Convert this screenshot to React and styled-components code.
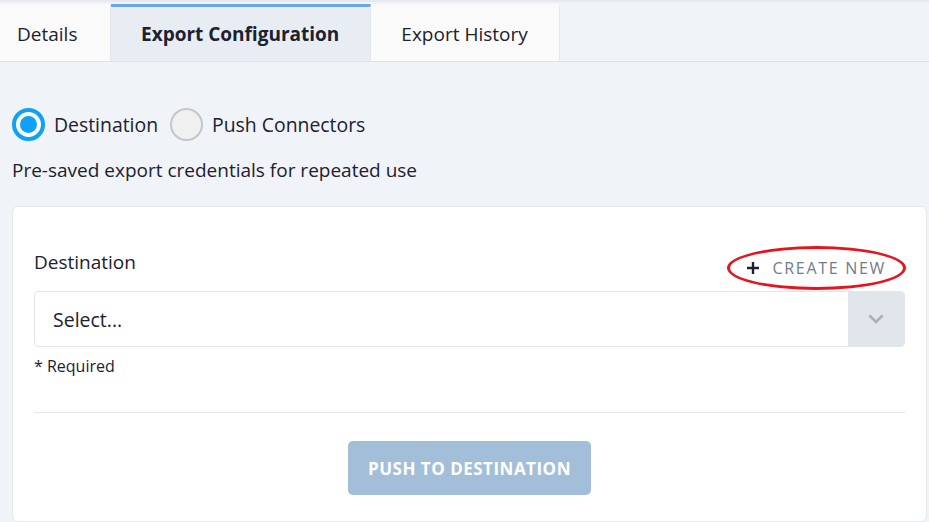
import React from 'react'
import styled, { createGlobalStyle } from 'styled-components'

const GlobalStyle = createGlobalStyle`
  html, body {
    margin: 0;
    padding: 0;
    background: #f0f3f7;
    font-family: "Open Sans", Lato, sans-serif;
    color: #1c2130;
  }
  * { box-sizing: border-box; }
`

const Page = styled.div`
  width: 929px;
  height: 522px;
  overflow: hidden;
  display: flex;
  flex-direction: column;
`

const TabBar = styled.nav`
  display: flex;
  height: 62px;
  padding-top: 2px;
  border-top: 2px solid #e6e9ee;
  border-bottom: 1px solid #dde2e8;
`

const Tab = styled.div`
  display: flex;
  align-items: center;
  padding: 0 31px 0 ${p => (p.$first ? '17px' : '30px')};
  min-width: ${p => p.$min || 0}px;
  font-size: 19px;
  font-weight: ${p => (p.$active ? 700 : 400)};
  background: ${p => (p.$active ? '#e8edf4' : '#fafafa')};
  border-top: 3px solid ${p => (p.$active ? '#6ea8e2' : 'transparent')};
  border-right: 1px solid #e3e6ea;
  color: #1c2130;
`

const Content = styled.main`
  flex: 1;
  padding: 46px 0 0 12px;
  display: flex;
  flex-direction: column;
`

const RadioRow = styled.div`
  display: flex;
  align-items: center;
  gap: 12px;
`

const RadioOption = styled.label`
  display: flex;
  align-items: center;
  gap: 9px;
  font-size: 19.4px;
`

const RadioCircle = styled.span`
  width: 33px;
  height: 33px;
  border-radius: 50%;
  border: ${p => (p.$checked ? '4px solid #0ea1f4' : '2px solid #c4c6c9')};
  background: ${p => (p.$checked ? '#fff' : '#f0f0f0')};
  display: flex;
  align-items: center;
  justify-content: center;
  &::after {
    content: '';
    display: ${p => (p.$checked ? 'block' : 'none')};
    width: 17px;
    height: 17px;
    border-radius: 50%;
    background: #0ea1f4;
  }
`

const Hint = styled.p`
  margin: 16px 0 0;
  font-size: 19px;
`

const Card = styled.section`
  margin-top: 23px;
  flex: 1;
  margin-right: 2px;
  background: #fff;
  border: 1px solid #e4e7ec;
  border-radius: 6px;
  padding: 44px 21px 0 21px;
  display: flex;
  flex-direction: column;
`

const FieldHead = styled.div`
  display: flex;
  justify-content: space-between;
  align-items: flex-end;
  height: 38px;
`

const FieldLabel = styled.span`
  font-size: 19px;
  align-self: flex-start;
  margin-top: -2px;
`

const CreateNew = styled.button`
  position: relative;
  border: none;
  background: none;
  margin-bottom: 10px;
  padding: 0 19px 0 0;
  font-family: inherit;
  font-size: 16px;
  letter-spacing: 1.7px;
  color: #6f7c8e;
  display: flex;
  align-items: center;
  gap: 12px;
  & svg.plus { color: #1c2130; }
`

const Annotation = styled.span`
  position: absolute;
  left: -19px;
  right: -1px;
  top: 50%;
  height: 44px;
  transform: translateY(-50%);
  border: 3px solid #e5141d;
  border-radius: 50%;
  pointer-events: none;
`

const Select = styled.div`
  margin-top: 2px;
  height: 56px;
  border: 1px solid #e2e6eb;
  border-radius: 4px;
  display: flex;
  overflow: hidden;
`

const SelectValue = styled.span`
  flex: 1;
  display: flex;
  align-items: center;
  padding-left: 18px;
  font-size: 19.5px;
`

const Indicator = styled.span`
  width: 56px;
  background: #e1e6ec;
  display: flex;
  align-items: center;
  justify-content: center;
  color: #a9b0ba;
`

const Required = styled.small`
  margin-top: 8px;
  font-size: 16px;
  color: #1c2130;
`

const Divider = styled.hr`
  margin: 35px 0 0;
  border: none;
  border-top: 1px solid #e6e8ee;
`

const Actions = styled.div`
  display: flex;
  justify-content: center;
  padding-top: 28px;
`

const PrimaryButton = styled.button`
  width: 243px;
  height: 54px;
  border: none;
  border-radius: 5px;
  background: #a3bed8;
  color: #fff;
  font-family: inherit;
  font-weight: 700;
  font-size: 17px;
  letter-spacing: 0.5px;
`

export default function App() {
  return (
    <Page>
      <GlobalStyle />
      <TabBar>
        <Tab $first $min={111}>Details</Tab>
        <Tab $active $min={260}>Export Configuration</Tab>
        <Tab $min={189}>Export History</Tab>
      </TabBar>
      <Content>
        <RadioRow>
          <RadioOption>
            <RadioCircle $checked />
            Destination
          </RadioOption>
          <RadioOption>
            <RadioCircle />
            Push Connectors
          </RadioOption>
        </RadioRow>
        <Hint>Pre-saved export credentials for repeated use</Hint>
        <Card>
          <FieldHead>
            <FieldLabel>Destination</FieldLabel>
            <CreateNew>
              <svg className="plus" width="14" height="14" viewBox="0 0 14 14">
                <path d="M7 1v12M1 7h12" stroke="currentColor" strokeWidth="2.4" />
              </svg>
              CREATE NEW
              <Annotation />
            </CreateNew>
          </FieldHead>
          <Select>
            <SelectValue>Select...</SelectValue>
            <Indicator>
              <svg width="16" height="10" viewBox="0 0 16 10">
                <path d="M1.5 1.5l6.5 6.5 6.5-6.5" fill="none" stroke="currentColor" strokeWidth="2.6" />
              </svg>
            </Indicator>
          </Select>
          <Required>* Required</Required>
          <Divider />
          <Actions>
            <PrimaryButton>PUSH TO DESTINATION</PrimaryButton>
          </Actions>
        </Card>
      </Content>
    </Page>
  )
}
